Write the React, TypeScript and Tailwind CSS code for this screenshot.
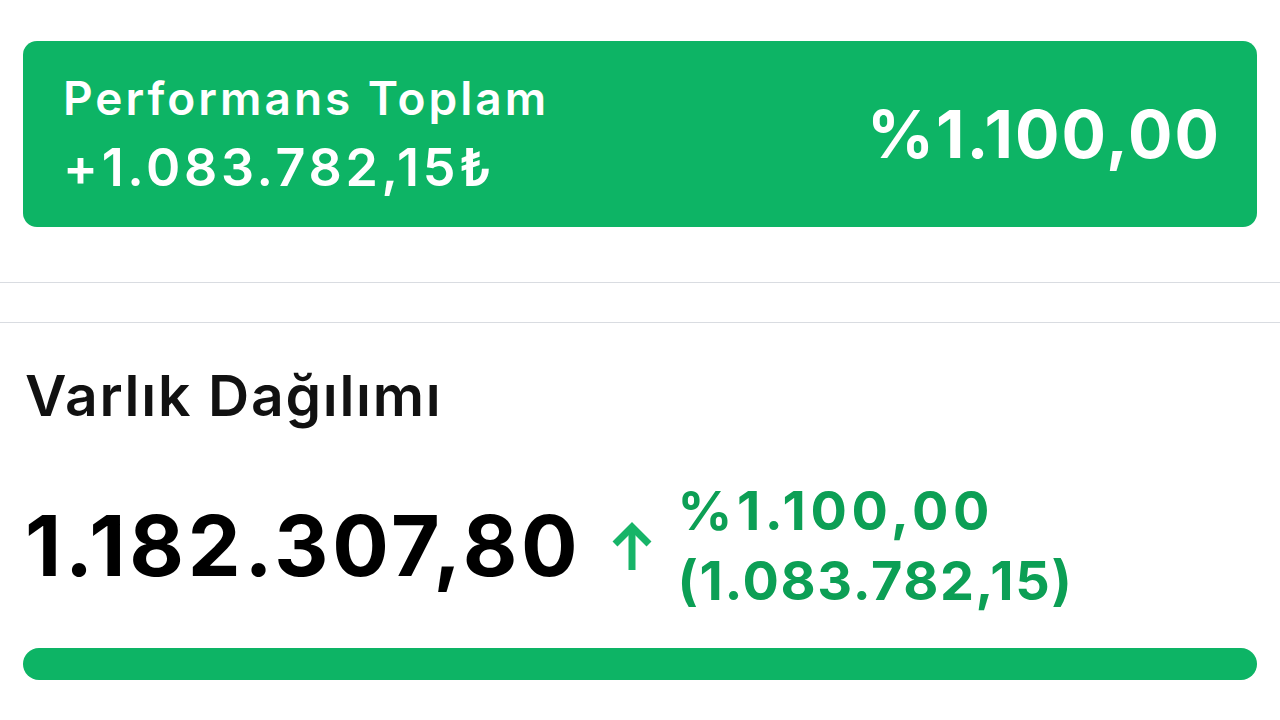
import React from 'react';

function UpArrow() {
  return (
    <svg width="40" height="50" viewBox="0 0 40 50" fill="none" className="shrink-0">
      <path d="M20 6 V49" stroke="#17b468" strokeWidth="7" />
      <path d="M3 23 L20 6 L37 23" stroke="#17b468" strokeWidth="7" strokeLinejoin="miter" />
    </svg>
  );
}

export default function App() {
  return (
    <div className="w-[1280px] h-[720px] bg-white overflow-hidden font-['Inter',sans-serif]">
      {/* Performance summary card */}
      <div className="pt-[41px] px-[23px]">
        <div className="h-[186px] rounded-[14px] bg-[#0db465] flex items-center justify-between pl-[40px] pr-[36px]">
          <div className="flex flex-col gap-[15px] text-white">
            <span className="text-[46px] font-semibold leading-[52px] tracking-[0.065em]">Performans Toplam</span>
            <span className="text-[52px] font-semibold leading-[58px] tracking-[0.07em]">+1.083.782,15₺</span>
          </div>
          <span className="text-[66px] font-bold text-white tracking-[0.03em]">%1.100,00</span>
        </div>
      </div>

      {/* Divider band */}
      <div className="mt-[55px] h-[41px] border-y border-[#d9dce1]" />

      {/* Asset distribution */}
      <div className="px-[25px] pt-[41px]">
        <h2 className="text-[57px] font-semibold text-[#111] leading-[64px] tracking-[0.03em]">Varlık Dağılımı</h2>
        <div className="mt-[48px] flex items-center">
          <span className="text-[84px] font-bold text-black leading-none tracking-[0.045em]">1.182.307,80</span>
          <div className="ml-[30px]">
            <UpArrow />
          </div>
          <div className="ml-[26px] flex flex-col text-[#0c9f55] font-bold text-[54px] leading-[70px]">
            <span className="tracking-[0.085em]">%1.100,00</span>
            <span className="tracking-[0.03em]">(1.083.782,15)</span>
          </div>
        </div>
      </div>

      {/* Allocation bar */}
      <div className="px-[23px] mt-[32px]">
        <div className="h-[32px] rounded-full bg-[#0db465]" />
      </div>
    </div>
  );
}
